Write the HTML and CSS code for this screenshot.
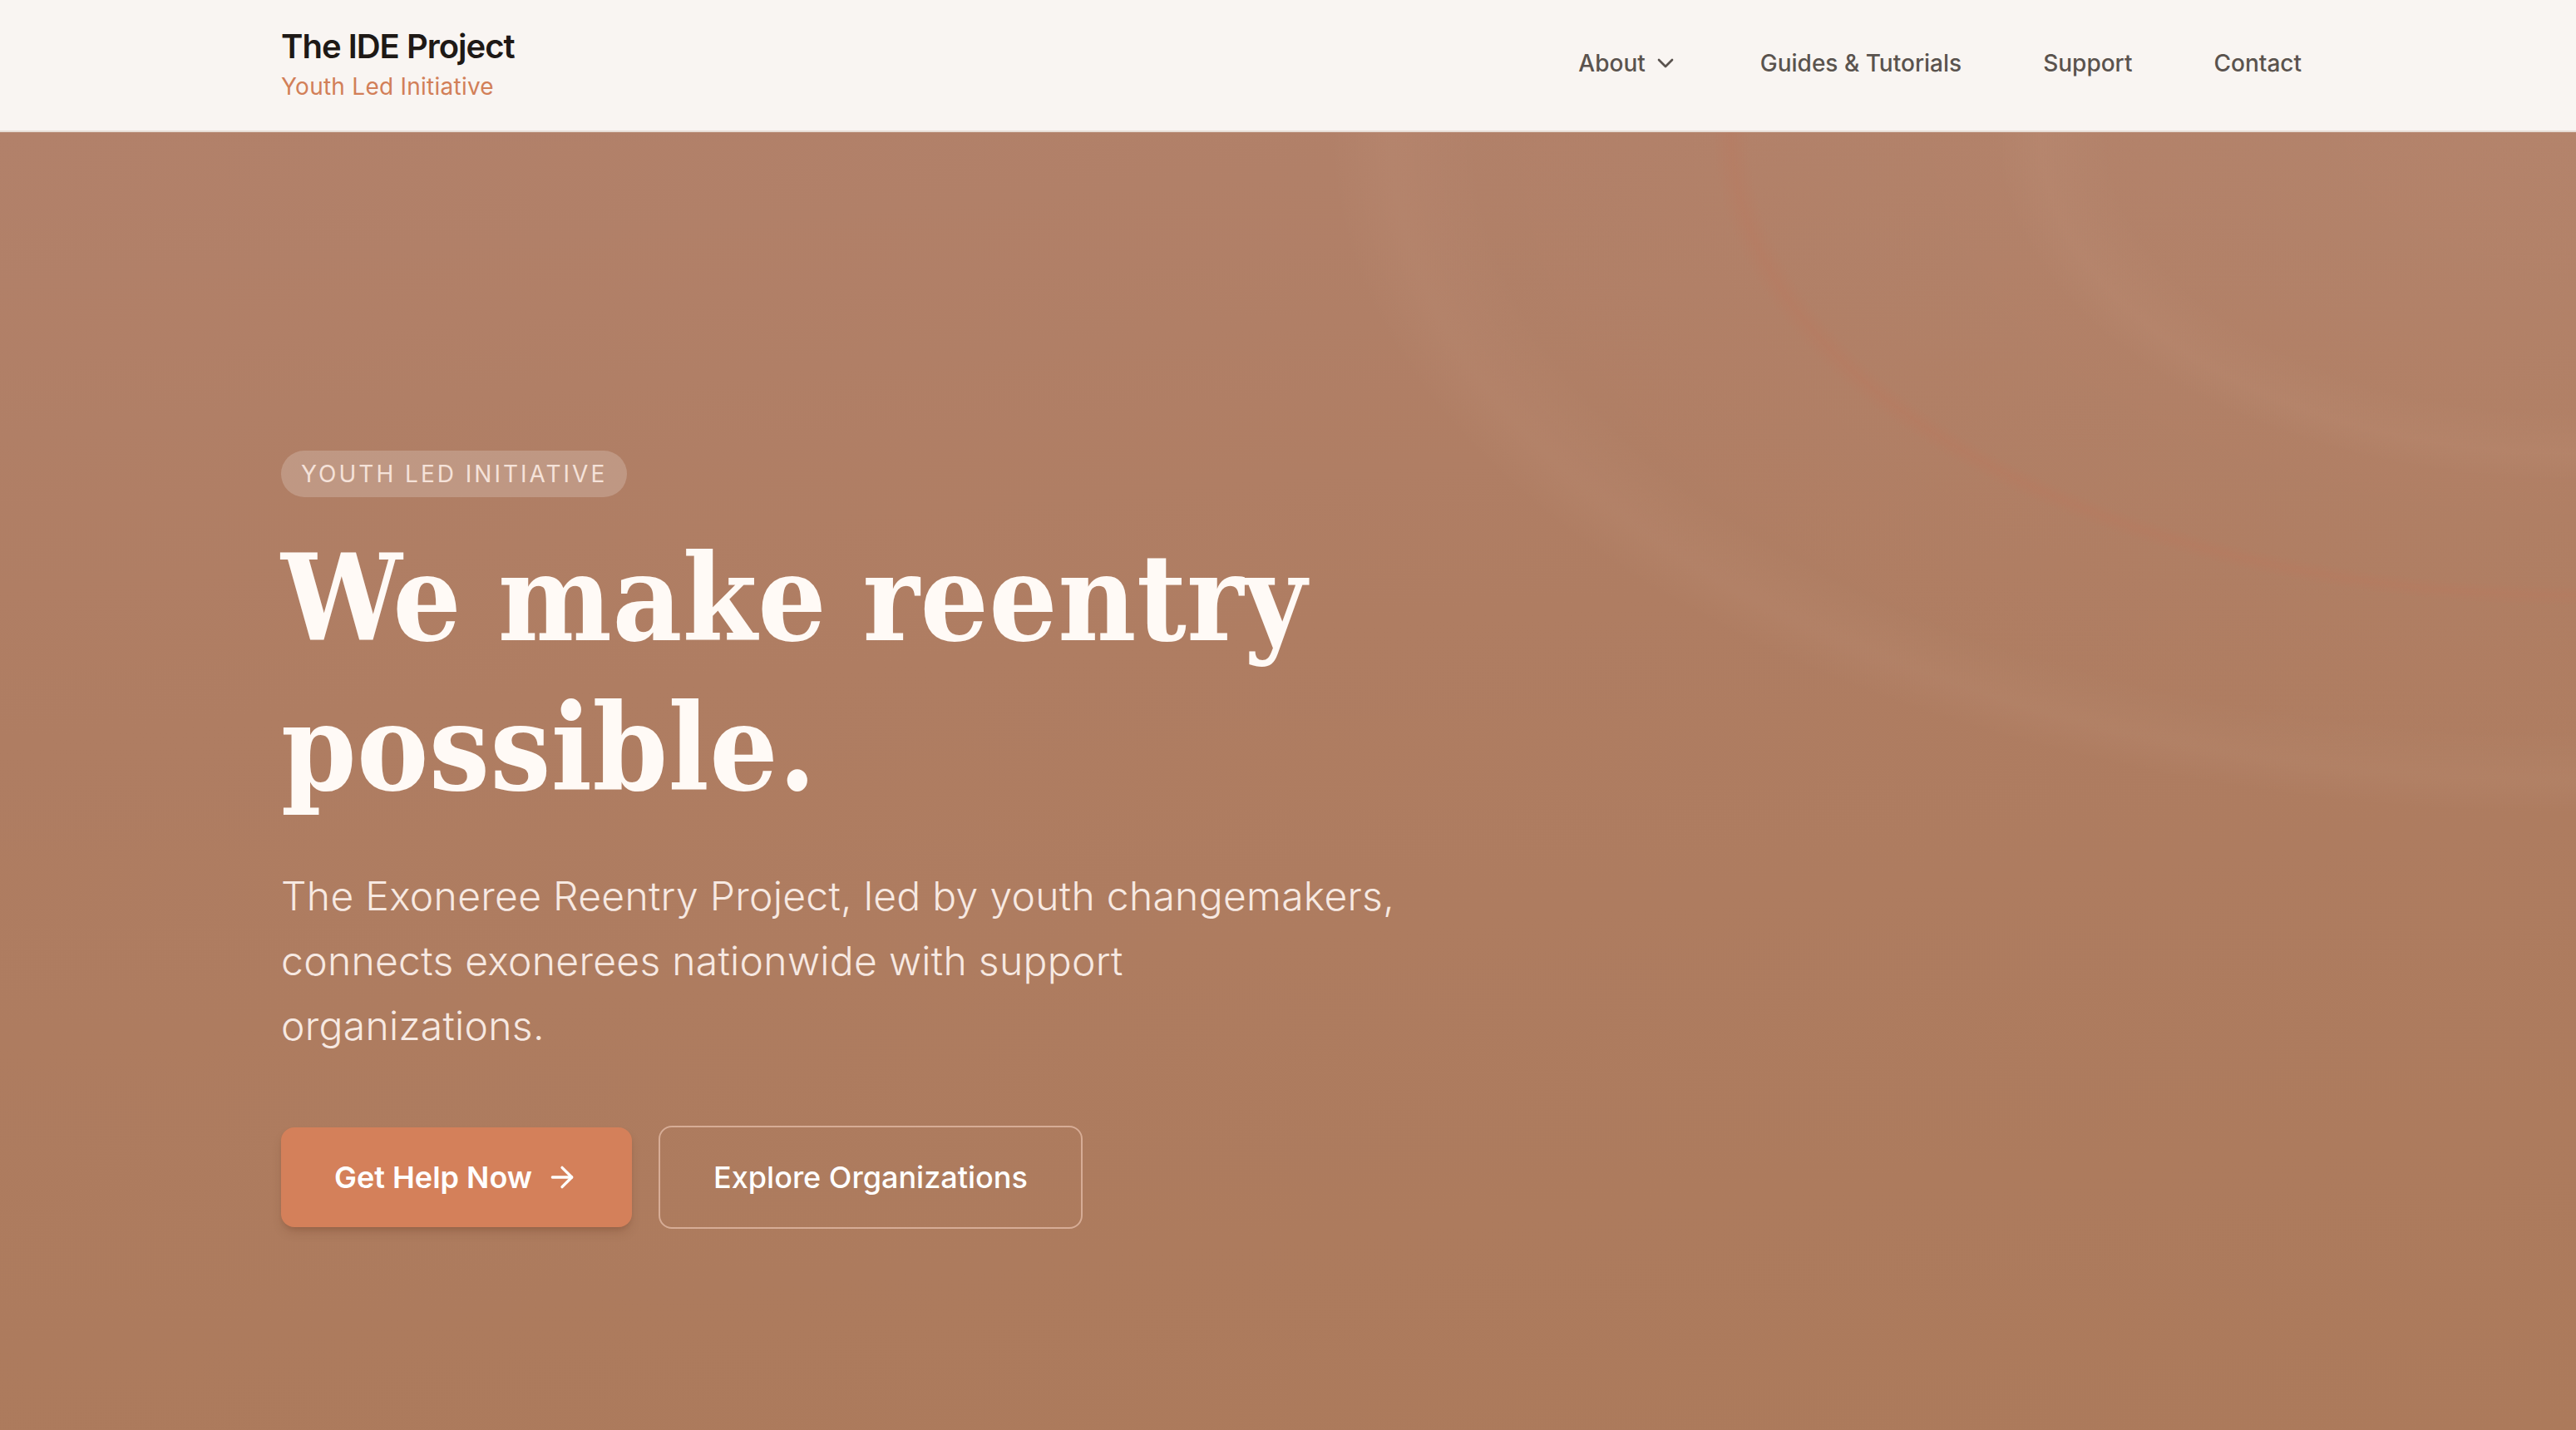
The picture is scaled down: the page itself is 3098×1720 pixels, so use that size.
FILE: index.html
```html
<!DOCTYPE html>
<html lang="en">
<head>
<meta charset="utf-8">
<title>The IDE Project</title>
<link rel="stylesheet" href="styles.css">
</head>
<body>
<header class="site-header">
  <div class="container header-inner">
    <a class="brand" href="#">
      <span class="brand-title">The IDE Project</span>
      <span class="brand-sub">Youth Led Initiative</span>
    </a>
    <nav class="nav">
      <a class="nav-link" href="#">About
        <svg class="chev" viewBox="0 0 24 24" fill="none" stroke="currentColor" stroke-width="2" stroke-linecap="round" stroke-linejoin="round"><path d="m6 9 6 6 6-6"/></svg>
      </a>
      <a class="nav-link" href="#">Guides &amp; Tutorials</a>
      <a class="nav-link" href="#">Support</a>
      <a class="nav-link" href="#">Contact</a>
    </nav>
  </div>
</header>
<main class="hero">
  <div class="hero-bg"></div>
  <div class="container hero-inner">
    <span class="badge">Youth Led Initiative</span>
    <h1 class="headline">We make reentry possible.</h1>
    <p class="lead">The Exoneree Reentry Project, led by youth changemakers,<br>connects exonerees nationwide with support<br>organizations.</p>
    <div class="actions">
      <a class="btn btn-primary" href="#">Get Help Now
        <svg class="arrow" viewBox="0 0 24 24" fill="none" stroke="currentColor" stroke-width="2" stroke-linecap="round" stroke-linejoin="round"><path d="M5 12h14"/><path d="m12 5 7 7-7 7"/></svg>
      </a>
      <a class="btn btn-outline" href="#">Explore Organizations</a>
    </div>
  </div>
</main>
</body>
</html>
```
FILE: styles.css
```css
* { box-sizing: border-box; }
html, body { margin: 0; padding: 0; }
body {
  font-family: "Inter", "Noto Sans", "Liberation Sans", sans-serif;
  background: #ad7a5c;
  overflow: hidden;
}
a { text-decoration: none; color: inherit; }

.container {
  max-width: 2560px;
  margin: 0 auto;
  padding: 0 61px 0 69px;
}

.site-header {
  background: #f9f5f2;
  border-bottom: 2px solid #e6dcd5;
}
.header-inner {
  display: flex;
  align-items: center;
  justify-content: space-between;
  padding-top: 28px;
  padding-bottom: 33px;
}
.brand { display: flex; flex-direction: column; }
.brand-title {
  font-size: 40px;
  line-height: 56px;
  font-weight: 600;
  letter-spacing: -1px;
  color: #1e1916;
}
.brand-sub {
  font-size: 28px;
  line-height: 40px;
  letter-spacing: 0.25px;
  color: #d27f58;
}
.nav {
  display: flex;
  align-items: center;
  gap: 98px;
}
.nav-link {
  display: flex;
  align-items: center;
  gap: 8px;
  font-size: 28px;
  line-height: 40px;
  font-weight: 500;
  color: #5a534e;
}
.nav-link:first-child { margin-left: 4px; }
.chev { width: 32px; height: 32px; }

.hero {
  position: relative;
  min-height: 1561px;
  background: linear-gradient(175deg, #b2816a 0%, #af7d62 40%, #ac7a5b 100%);
  overflow: hidden;
}
.hero-bg {
  position: absolute;
  inset: 0;
  background:
    radial-gradient(ellipse 1030px 565px at 100% 0%, rgba(188,118,92,0) 96.5%, rgba(188,118,92,0.3) 98.6%, rgba(188,118,92,0) 100.8%),
    radial-gradient(ellipse 1500px 820px at 100% 0%, rgba(255,220,200,0) 88%, rgba(255,220,200,0.045) 95%, rgba(255,220,200,0) 100%),
    radial-gradient(ellipse 700px 420px at 100% 0%, rgba(255,220,200,0) 80%, rgba(255,220,200,0.04) 92%, rgba(255,220,200,0) 100%),
    radial-gradient(ellipse 1900px 1100px at 100% 0%, rgba(255,225,205,0.04) 0%, rgba(255,225,205,0) 80%);
  pointer-events: none;
}
.hero-inner {
  position: relative;
  display: flex;
  flex-direction: column;
  align-items: flex-start;
  padding-top: 383px;
}
.badge {
  display: inline-block;
  padding: 8px 24px;
  border-radius: 999px;
  background: rgba(255,255,255,0.2);
  color: #f5e2d9;
  font-size: 28px;
  line-height: 40px;
  letter-spacing: 3px;
  text-transform: uppercase;
}
.headline {
  margin: 32px 0 0;
  font-family: "DejaVu Serif Condensed", "DejaVu Serif", "Liberation Serif", serif;
  font-weight: 700;
  font-size: 144px;
  line-height: 180px;
  letter-spacing: 0.5px;
  word-spacing: -2px;
  color: #fffaf6;
  max-width: 1400px;
}
.lead {
  margin: 49px 0 0;
  max-width: 1500px;
  font-size: 48px;
  line-height: 78px;
  font-weight: 300;
  letter-spacing: 0.3px;
  color: #f7e9e2;
}
.actions {
  display: flex;
  align-items: center;
  gap: 32px;
  margin-top: 81px;
}
.btn {
  display: inline-flex;
  align-items: center;
  font-size: 36px;
  line-height: 56px;
  color: #ffffff;
  border-radius: 16px;
}
.btn-primary {
  padding: 32px 64px;
  gap: 16px;
  background: #d4805a;
  font-weight: 600;
  box-shadow: 0 8px 14px -4px rgba(90,45,25,0.25), 0 3px 6px -3px rgba(90,45,25,0.2);
}
.arrow { width: 40px; height: 40px; }
.btn-outline {
  padding: 32px 64px;
  border: 2px solid rgba(255,222,205,0.5);
  font-weight: 500;
}
```
